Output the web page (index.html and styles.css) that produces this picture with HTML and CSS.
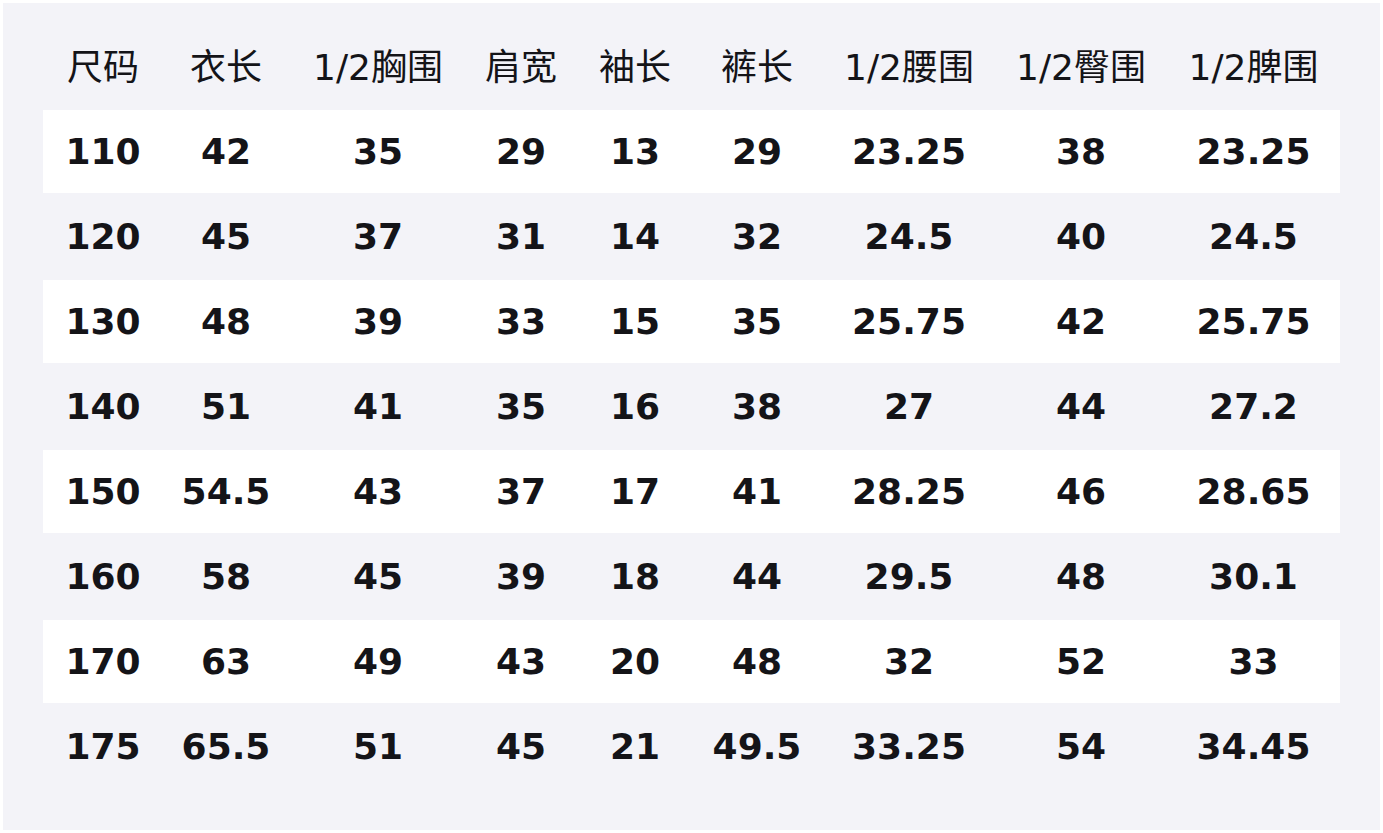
FILE: index.html
```html
<!DOCTYPE html>
<html lang="zh">
<head>
<meta charset="utf-8">
<title>尺码表</title>
<link rel="stylesheet" href="styles.css">
</head>
<body>
<div class="panel">
  <div class="table">
    <div class="row head">
      <div>尺码</div><div>衣长</div><div>1/2胸围</div><div>肩宽</div><div>袖长</div><div>裤长</div><div>1/2腰围</div><div>1/2臀围</div><div>1/2脾围</div>
    </div>
    <div class="row odd">
      <div>110</div><div>42</div><div>35</div><div>29</div><div>13</div><div>29</div><div>23.25</div><div>38</div><div>23.25</div>
    </div>
    <div class="row">
      <div>120</div><div>45</div><div>37</div><div>31</div><div>14</div><div>32</div><div>24.5</div><div>40</div><div>24.5</div>
    </div>
    <div class="row odd">
      <div>130</div><div>48</div><div>39</div><div>33</div><div>15</div><div>35</div><div>25.75</div><div>42</div><div>25.75</div>
    </div>
    <div class="row">
      <div>140</div><div>51</div><div>41</div><div>35</div><div>16</div><div>38</div><div>27</div><div>44</div><div>27.2</div>
    </div>
    <div class="row odd">
      <div>150</div><div>54.5</div><div>43</div><div>37</div><div>17</div><div>41</div><div>28.25</div><div>46</div><div>28.65</div>
    </div>
    <div class="row">
      <div>160</div><div>58</div><div>45</div><div>39</div><div>18</div><div>44</div><div>29.5</div><div>48</div><div>30.1</div>
    </div>
    <div class="row odd">
      <div>170</div><div>63</div><div>49</div><div>43</div><div>20</div><div>48</div><div>32</div><div>52</div><div>33</div>
    </div>
    <div class="row">
      <div>175</div><div>65.5</div><div>51</div><div>45</div><div>21</div><div>49.5</div><div>33.25</div><div>54</div><div>34.45</div>
    </div>
  </div>
</div>
</body>
</html>
```

FILE: styles.css
```css
html, body {
  margin: 0;
  padding: 0;
  background: #ffffff;
}
body {
  padding: 3px;
  width: 1377px;
  height: 827px;
}
.panel {
  background: #f3f3f8;
  width: 1377px;
  height: 827px;
  box-sizing: border-box;
  padding: 22px 40px 40px 40px;
  overflow: hidden;
}
.table {
  display: flex;
  flex-direction: column;
  gap: 2px;
}
.row {
  display: grid;
  grid-template-columns: 120px 126px 178px 108px 120px 124px 180px 164px 177px;
  height: 83px;
  box-sizing: border-box;
  align-items: center;
  text-align: center;
  color: #141418;
  font-family: "DejaVu Sans", "Noto Sans CJK SC", sans-serif;
  font-size: 36px;
  font-weight: bold;
  white-space: nowrap;
}
.row > div:last-child {
  padding-left: 4px;
}
.row.head {
  font-weight: normal;
  padding-bottom: 6px;
}
.row.odd {
  background: #ffffff;
}
```
